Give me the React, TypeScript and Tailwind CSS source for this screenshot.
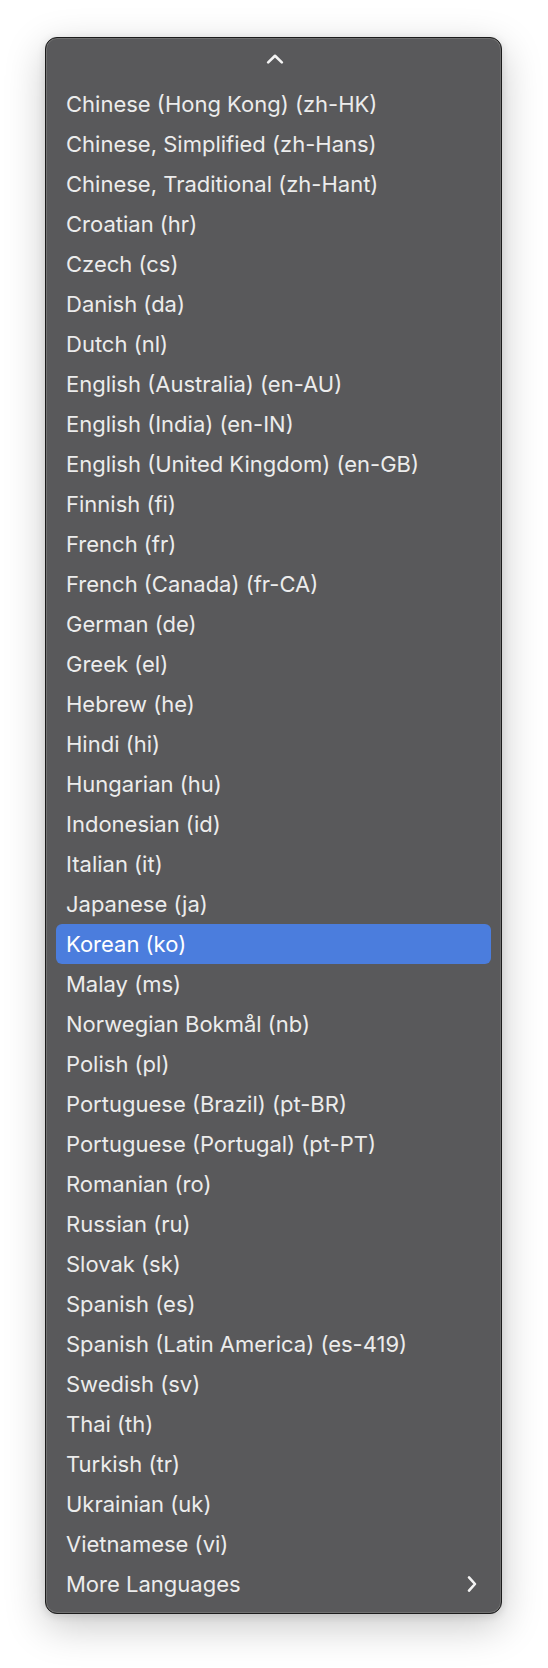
import React from 'react';

const languages: string[] = [
    'Chinese (Hong Kong) (zh-HK)',
    'Chinese, Simplified (zh-Hans)',
    'Chinese, Traditional (zh-Hant)',
    'Croatian (hr)',
    'Czech (cs)',
    'Danish (da)',
    'Dutch (nl)',
    'English (Australia) (en-AU)',
    'English (India) (en-IN)',
    'English (United Kingdom) (en-GB)',
    'Finnish (fi)',
    'French (fr)',
    'French (Canada) (fr-CA)',
    'German (de)',
    'Greek (el)',
    'Hebrew (he)',
    'Hindi (hi)',
    'Hungarian (hu)',
    'Indonesian (id)',
    'Italian (it)',
    'Japanese (ja)',
    'Korean (ko)',
    'Malay (ms)',
    'Norwegian Bokmål (nb)',
    'Polish (pl)',
    'Portuguese (Brazil) (pt-BR)',
    'Portuguese (Portugal) (pt-PT)',
    'Romanian (ro)',
    'Russian (ru)',
    'Slovak (sk)',
    'Spanish (es)',
    'Spanish (Latin America) (es-419)',
    'Swedish (sv)',
    'Thai (th)',
    'Turkish (tr)',
    'Ukrainian (uk)',
    'Vietnamese (vi)',
];

const selected = 'Korean (ko)';

const ChevronUp = () => (
    <svg width="18" height="10" viewBox="0 0 18 10" fill="none">
        <path d="M2.2 8.4 L9 1.8 L15.8 8.4" stroke="#f4f4f4" strokeWidth="2.6" strokeLinecap="round" strokeLinejoin="round" />
    </svg>
);

const ChevronRight = () => (
    <svg width="10" height="18" viewBox="0 0 10 18" fill="none">
        <path d="M2 2.4 L8 9 L2 15.6" stroke="#f4f4f4" strokeWidth="2.6" strokeLinecap="round" strokeLinejoin="round" />
    </svg>
);

const MenuRow: React.FC<{ label: string; active?: boolean; children?: React.ReactNode }> = ({ label, active, children }) => (
    <div
        className={`h-10 mx-[10px] px-[10px] flex items-center justify-between rounded-[6px] ${active ? 'bg-[#4b7ddd] text-white' : 'text-[#ececec]'}`}
    >
        <span className="whitespace-nowrap">{label}</span>
        {children}
    </div>
);

export default function App() {
    return (
        <div className="w-[548px] h-[1668px] bg-white pl-[45px] pt-[37px]">
            <div
                className="w-[457px] h-[1577px] bg-[#59595b] rounded-[12px] border border-[#1c1c1c] shadow-[inset_0_0_0_1px_#707070,0_12px_40px_rgba(0,0,0,0.22),0_2px_8px_rgba(0,0,0,0.12)] flex flex-col"
                style={{ fontFamily: 'Inter, "Noto Sans", sans-serif' }}
            >
                {/* Scroll arrow */}
                <div className="h-[46px] flex justify-center pt-[16px] pl-[2px]">
                    <ChevronUp />
                </div>

                {/* Items */}
                <div className="flex flex-col text-[22px]">
                    {languages.map((l) => (
                        <MenuRow key={l} label={l} active={l === selected} />
                    ))}
                    <MenuRow label="More Languages">
                        <span className="pr-[4px] flex items-center">
                            <ChevronRight />
                        </span>
                    </MenuRow>
                </div>
            </div>
        </div>
    );
}
